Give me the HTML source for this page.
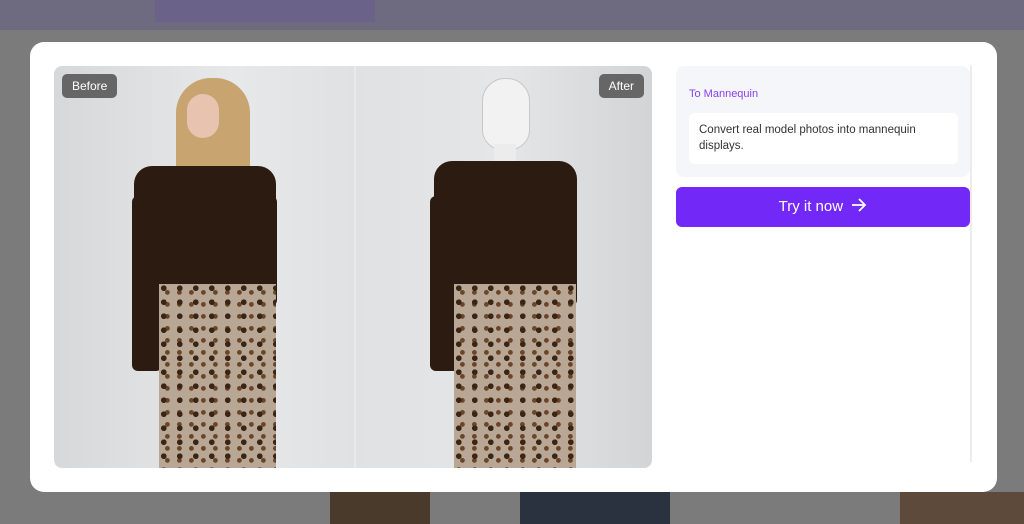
<!DOCTYPE html>
<html><head><style>
body{margin:0;width:1024px;height:524px;overflow:hidden;background:#7b7b7b;font-family:"Liberation Sans",sans-serif;position:relative}
.top{position:absolute;left:0;top:0;width:1024px;height:30px;background:#6e6a80}
.band{position:absolute;left:155px;top:0;width:220px;height:22px;background:#6a6288}
.bot{position:absolute;top:492px;height:32px}
.modal{position:absolute;left:30px;top:42px;width:967px;height:450px;background:#fff;border-radius:14px}
.img{position:absolute;left:54px;top:66px;width:598px;height:402px;border-radius:8px;overflow:hidden;background:linear-gradient(90deg,#d6d8da 0%,#e6e8ea 30%,#dfe1e3 50%,#e4e6e8 75%,#d2d4d6 100%)}
.tag{position:absolute;top:8px;height:24px;line-height:24px;padding:0 10px;background:#666;color:#fff;font-size:12px;border-radius:5px}
.j{position:absolute;background:#2c1b10}
.p{position:absolute;background:radial-gradient(circle at 30% 30%,#3a2416 18%,transparent 20%) 0 0/16px 14px,radial-gradient(circle at 70% 70%,#6b4527 18%,transparent 22%) 0 0/12px 12px,#b9a796}
.card{position:absolute;left:676px;top:66px;width:294px;height:111px;background:#f5f6fa;border-radius:8px}
.card .t{position:absolute;left:13px;top:22px;font-size:11px;color:#8a3ff0}
.card .d{position:absolute;left:13px;top:47px;width:269px;height:51px;background:#fff;border-radius:6px;font-size:11.5px;color:#333;line-height:16px;padding:9px 10px;box-sizing:border-box}
.btn{position:absolute;left:676px;top:187px;width:294px;height:40px;background:#7228f6;border-radius:6px;color:#fff;font-size:15px;text-align:center;line-height:40px}
.sb{position:absolute;left:970px;top:66px;width:2px;height:396px;background:#ececec}
</style></head><body>
<div class="top"></div><div class="band"></div>
<div class="bot" style="left:330px;width:100px;background:#4a3a2c"></div>
<div class="bot" style="left:520px;width:150px;background:#2a3240"></div>
<div class="bot" style="left:900px;width:124px;background:#5e4a3a"></div>
<div class="modal"></div>
<div class="img">
 <div style="position:absolute;left:300px;top:0;width:2px;height:402px;background:#e8eaec"></div>
 <div style="position:absolute;left:122px;top:12px;width:74px;height:130px;background:#c8a570;border-radius:35px 35px 10px 10px"></div>
 <div style="position:absolute;left:133px;top:28px;width:32px;height:44px;background:#e8c4b0;border-radius:16px"></div>
 <div class="j" style="left:80px;top:100px;width:142px;height:118px;border-radius:18px 18px 4px 4px"></div>
 <div class="j" style="left:78px;top:130px;width:30px;height:175px;border-radius:6px"></div>
 <div class="j" style="left:195px;top:130px;width:28px;height:110px;border-radius:6px"></div>
 <div class="p" style="left:105px;top:218px;width:117px;height:184px"></div>
 <div style="position:absolute;left:428px;top:12px;width:46px;height:70px;background:#f2f2f2;border:1px solid #c8c8c8;border-radius:23px 23px 20px 20px"></div>
 <div style="position:absolute;left:440px;top:78px;width:22px;height:22px;background:#ececec"></div>
 <div class="j" style="left:380px;top:95px;width:143px;height:123px;border-radius:18px 18px 4px 4px"></div>
 <div class="j" style="left:376px;top:130px;width:30px;height:175px;border-radius:6px"></div>
 <div class="j" style="left:495px;top:130px;width:28px;height:110px;border-radius:6px"></div>
 <div class="p" style="left:400px;top:218px;width:122px;height:184px"></div>
 <div class="tag" style="left:8px">Before</div>
 <div class="tag" style="right:8px">After</div>
</div>
<div class="card"><div class="t">To Mannequin</div><div class="d">Convert real model photos into mannequin displays.</div></div>
<div class="btn">Try it now&nbsp; <svg width="16" height="14" viewBox="0 0 16 14" style="vertical-align:-1px"><path d="M1 7H14M8 1L14 7L8 13" stroke="#fff" stroke-width="1.8" fill="none"/></svg></div>
<div class="sb"></div>
</body></html>
